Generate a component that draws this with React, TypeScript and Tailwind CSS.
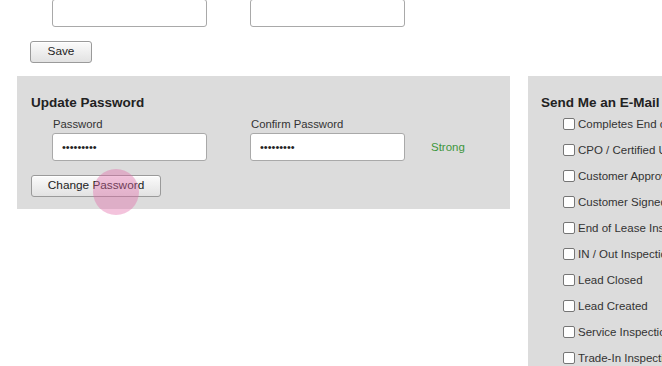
import React from "react";

const alerts = [
  "Completes End of Lease Inspection",
  "CPO / Certified Used Inspection",
  "Customer Approves Estimate",
  "Customer Signed Off",
  "End of Lease Inspection",
  "IN / Out Inspection",
  "Lead Closed",
  "Lead Created",
  "Service Inspection",
  "Trade-In Inspection",
];

const btn =
  "h-[22px] rounded-[3px] border border-[#9a9a9a] bg-gradient-to-b from-[#fbfbfb] to-[#e2e2e2] text-[11.8px] text-[#222] shadow-[inset_0_1px_0_#fff]";

const field =
  "h-[28px] w-[155px] rounded-[3px] border border-[#a9a9a9] bg-white px-[9px] text-[11px] text-[#222] outline-none";

const App: React.FC = () => {
  return (
    <div className="relative h-[366px] w-[662px] overflow-hidden bg-white font-['Liberation_Sans',Arial,sans-serif] text-[#333]">
      {/* top profile fields */}
      <div className="ml-[52px] -mt-px flex gap-[43px]">
        <input className={field} />
        <input className={field} />
      </div>
      <button className={`${btn} ml-[30px] mt-[14px] w-[62px]`}>Save</button>

      <div className="mt-[13px] flex items-start gap-[18px] pl-[17px]">
        {/* update password */}
        <div className="w-[493px] shrink-0 bg-[#dcdcdc] pb-[12px] pl-[14px] pt-[19px]">
          <h3 className="text-[13.5px] font-bold leading-[15px] text-[#222]">Update Password</h3>
          <div className="ml-[21px] mt-[7px] flex items-end gap-[43px]">
            <div className="flex flex-col">
              <label className="pl-px text-[11.3px] leading-[14px]">Password</label>
              <input type="password" defaultValue="abcdefghi" className={`${field} mt-[2px]`} />
            </div>
            <div className="flex flex-col">
              <label className="pl-px text-[11.3px] leading-[14px]">Confirm Password</label>
              <input type="password" defaultValue="abcdefghi" className={`${field} mt-[2px]`} />
            </div>
            <span className="-ml-[17px] mb-[7px] text-[11.5px] leading-[14px] text-[#3c963c]">Strong</span>
          </div>
          <button className={`${btn} mt-[14px] w-[130px] border-[#8a8a8a] shadow-[0_0_0_1px_#bdbdbd,inset_0_1px_0_#fff]`}>
            Change Password
          </button>
        </div>

        {/* e-mail notifications */}
        <div className="h-[300px] w-[200px] shrink-0 bg-[#dcdcdc] pl-[13px] pt-[19px]">
          <h3 className="whitespace-nowrap text-[13.5px] font-bold leading-[15px] text-[#222]">
            Send Me an E-Mail When
          </h3>
          <ul className="mt-px">
            {alerts.map((a) => (
              <li key={a} className="ml-[22px] flex h-[26px] items-center gap-[3px] whitespace-nowrap">
                <span className="h-[12px] w-[12px] shrink-0 rounded-[2px] border border-[#767676] bg-white" />
                <span className="text-[11.5px] leading-[14px]">{a}</span>
              </li>
            ))}
          </ul>
        </div>
      </div>

      {/* click highlight */}
      <div className="pointer-events-none absolute left-[93px] top-[169px] h-[46px] w-[46px] rounded-full bg-[#e06aa8]/40" />
    </div>
  );
};

export default App;
